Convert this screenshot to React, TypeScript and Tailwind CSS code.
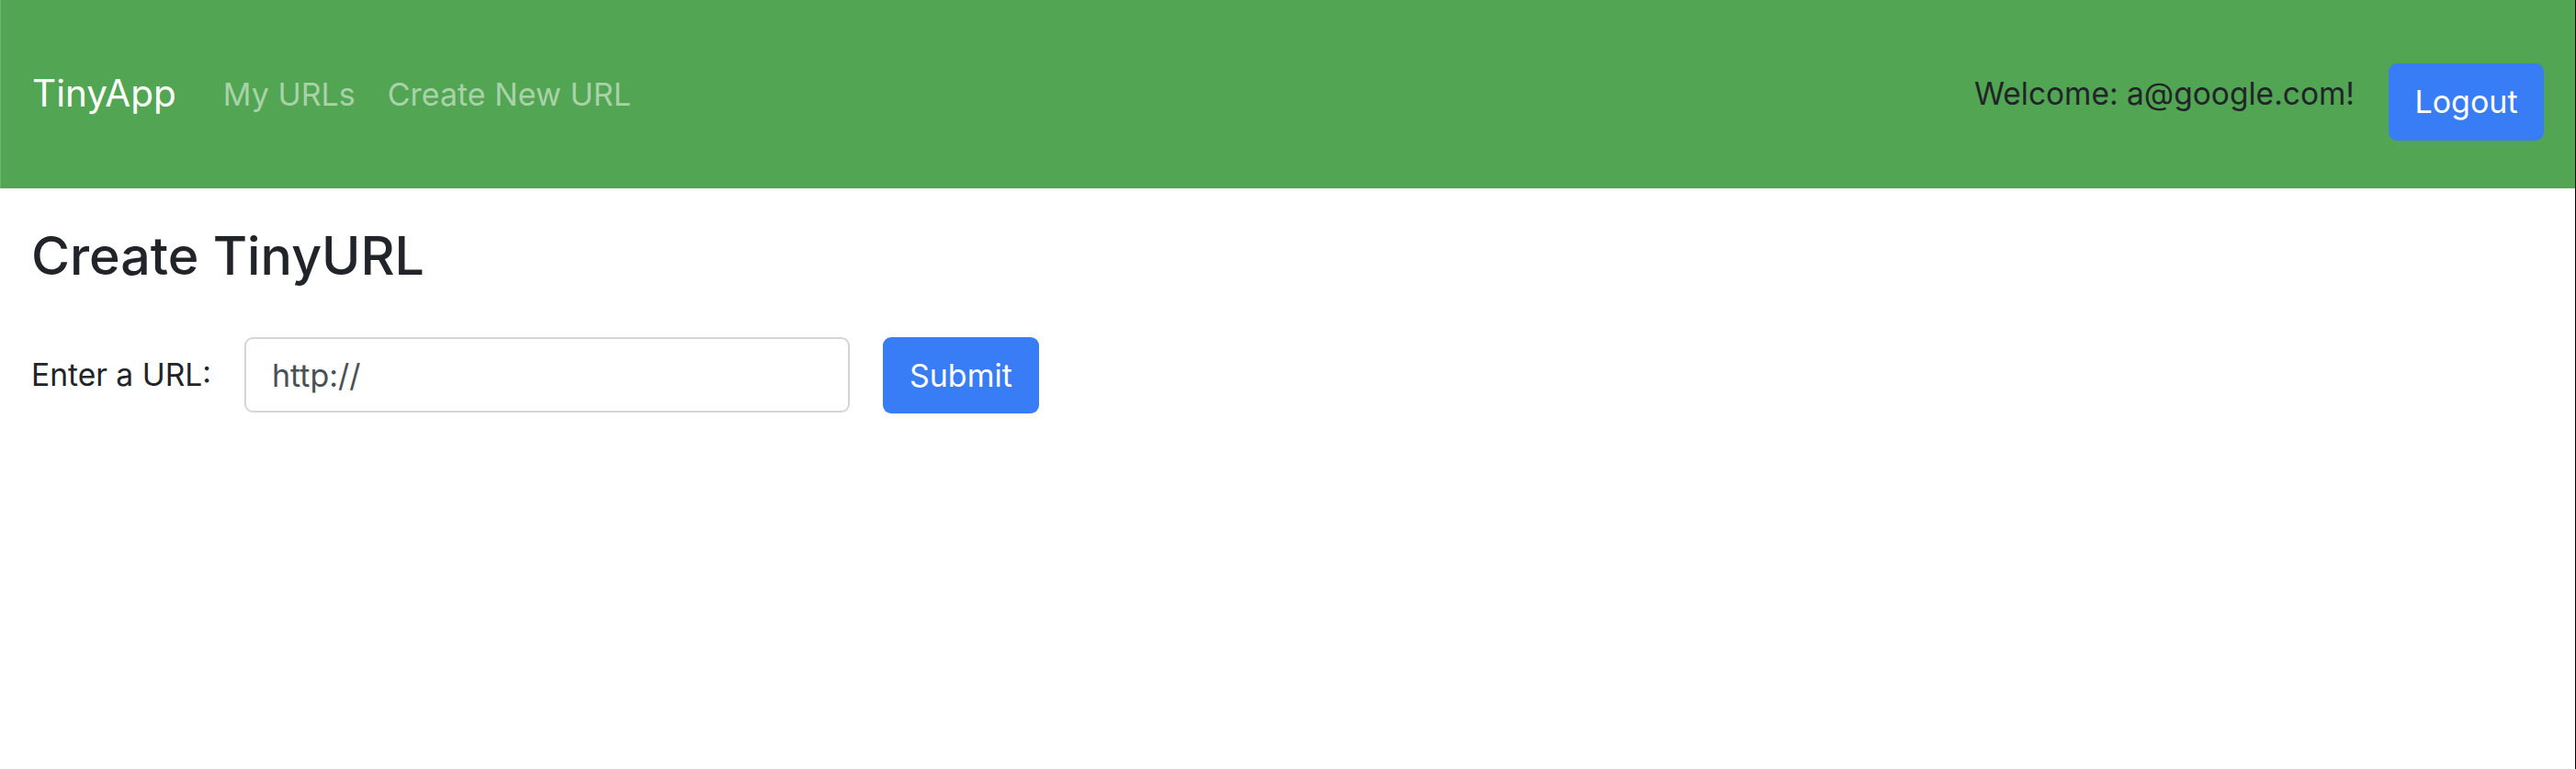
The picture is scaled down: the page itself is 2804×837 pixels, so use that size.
export default function App() {
  return (
    <div className="min-h-[837px] border-r border-black bg-white font-['Inter',sans-serif]">
      {/* Navbar */}
      <nav className="flex h-[205px] items-center border-l border-[#6fb56f] bg-[#52a552] pl-[34px] pr-[34px]">
        <a className="text-[40.5px] text-white">TinyApp</a>

        <div className="ml-[51px] flex items-center gap-[35px] text-[34px] text-[#a9d2a9]">
          <a>My URLs</a>
          <a>Create New URL</a>
        </div>

        <div className="ml-auto flex items-center gap-[37px]">
          <span className="text-[33.5px] text-[#212529]">Welcome: a@google.com!</span>
          <button className="mt-4 h-[84px] w-[169px] rounded-[9px] bg-[#387cf6] text-[34px] text-white">
            Logout
          </button>
        </div>
      </nav>

      {/* Form */}
      <main className="px-[34px] pt-[38px]">
        <h3 className="text-[57.3px] font-medium leading-tight text-[#212529]">Create TinyURL</h3>

        <form className="mt-[52px] flex items-center">
          <label className="text-[33.6px] text-[#212529]">Enter a URL:</label>
          <input
            type="text"
            defaultValue="http://"
            className="ml-[36px] h-[82px] w-[659px] rounded-[9px] border-2 border-[#d2d6da] bg-white px-[28px] text-[34px] text-[#495057] outline-none"
          />
          <button
            type="button"
            className="ml-[36px] h-[83px] w-[170px] rounded-[9px] bg-[#387cf6] text-[34px] text-white"
          >
            Submit
          </button>
        </form>
      </main>
    </div>
  );
}
